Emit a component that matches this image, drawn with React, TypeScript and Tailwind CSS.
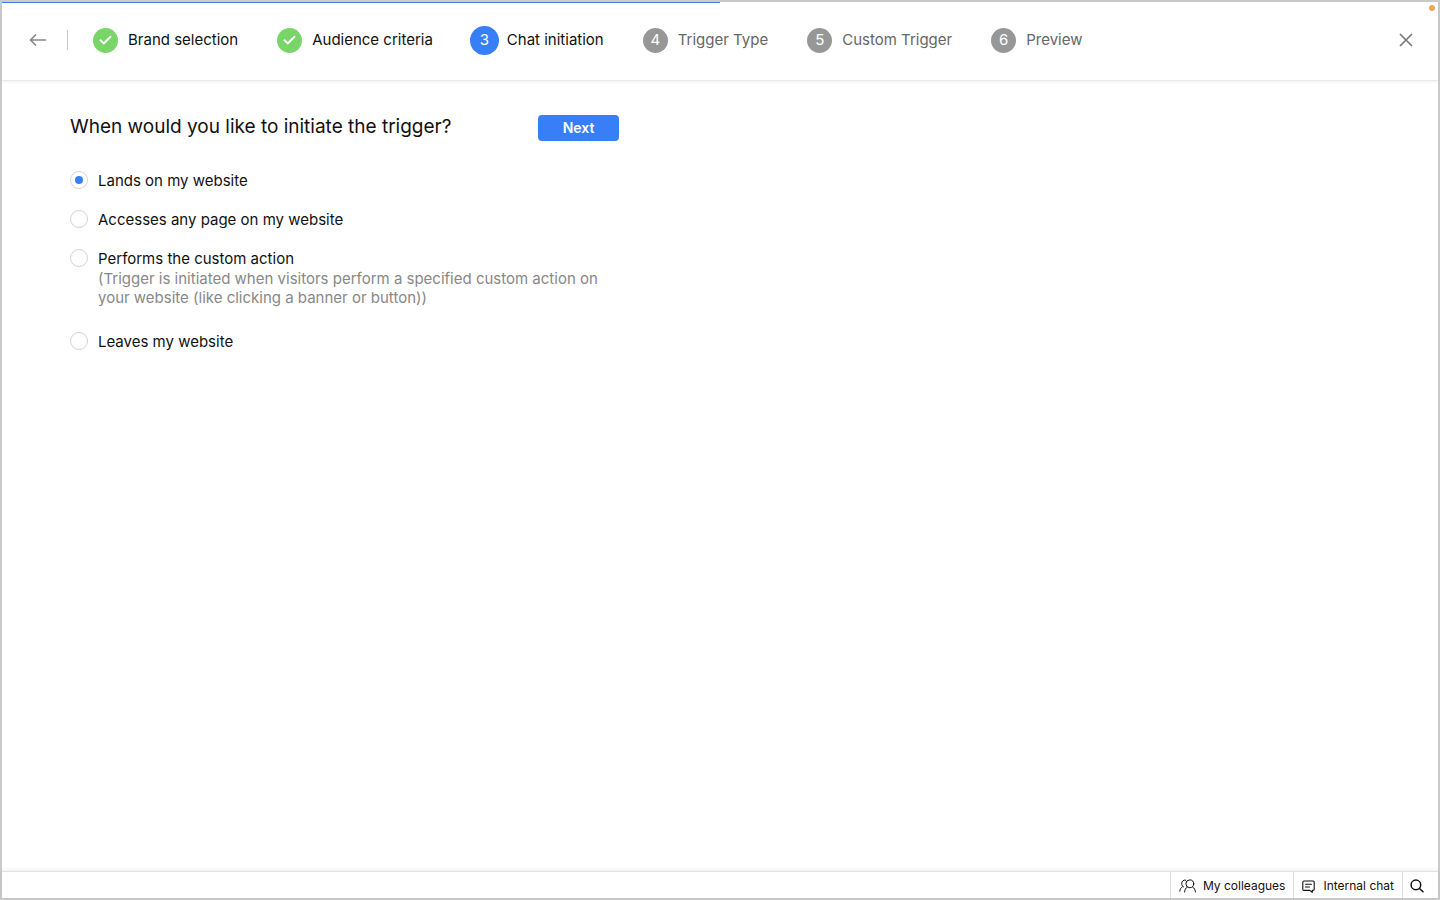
import { useState } from "react";
import clsx from "clsx";

const steps = [
  { id: 1, label: "Brand selection" },
  { id: 2, label: "Audience criteria" },
  { id: 3, label: "Chat initiation" },
  { id: 4, label: "Trigger Type" },
  { id: 5, label: "Custom Trigger" },
  { id: 6, label: "Preview" },
];

const options = [
  { value: "lands", label: "Lands on my website" },
  { value: "accesses", label: "Accesses any page on my website" },
  {
    value: "custom",
    label: "Performs the custom action",
    hint: "(Trigger is initiated when visitors perform a specified custom action on your website (like clicking a banner or button))",
  },
  { value: "leaves", label: "Leaves my website" },
];

const CURRENT_STEP = 3;

function BackIcon() {
  return (
    <svg width="18" height="14" viewBox="0 0 18 14" fill="none" stroke="currentColor" strokeWidth="1.7" strokeLinecap="round" strokeLinejoin="round">
      <path d="M16.5 7H1.5M6.500 2 1.500 7 6.500 12" />
    </svg>
  );
}

function CloseIcon() {
  return (
    <svg width="14" height="14" viewBox="0 0 14 14" fill="none" stroke="currentColor" strokeWidth="1.7">
      <path d="M1 1l12 12M13 1 1 13" />
    </svg>
  );
}

function CheckIcon() {
  return (
    <svg width="13" height="10" viewBox="0 0 13 10" fill="none" stroke="currentColor" strokeWidth="2">
      <path d="M1 4.7 4.8 8.4 12 1.2" />
    </svg>
  );
}

function PeopleIcon() {
  return (
    <svg width="18" height="14" viewBox="0 0 18 14" fill="none" stroke="currentColor" strokeWidth="1" strokeLinecap="round">
      <circle cx="10.8" cy="4.800" r="3.900" />
      <path d="M5.600 13c.1-2.300 1-3.900 2.600-4.900M16.400 13c-.1-2.300-1-3.900-2.700-4.900" />
      <path d="M6.600 1.100C4.500.6 2.700 2.300 2.700 4.500c0 1.400.7 2.600 1.700 3.300M3.500 7.700C1.900 8.600.9 10.100.8 12.200" />
    </svg>
  );
}

function ChatIcon() {
  return (
    <svg width="13" height="13" viewBox="0 0 13 13" fill="none" stroke="currentColor" strokeWidth="1.1" strokeLinecap="round" strokeLinejoin="round">
      <path d="M2 1h9a1.200 1.200 0 0 1 1.200 1.200v7a1.200 1.200 0 0 1-1.200 1.200h-.8v2L7.800 10.400H2A1.200 1.200 0 0 1 .8 9.200v-7A1.200 1.200 0 0 1 2 1Z" />
      <path d="M3.500 4.300h6M3.500 7h4" />
    </svg>
  );
}

function SearchIcon() {
  return (
    <svg width="14" height="14" viewBox="0 0 14 14" fill="none" stroke="currentColor" strokeWidth="1.5" strokeLinecap="round">
      <circle cx="5.900" cy="5.900" r="4.800" />
      <path d="M9.500 9.500 13 12.700" />
    </svg>
  );
}

function Step({ id, label }: { id: number; label: string }) {
  const done = id < CURRENT_STEP;
  const active = id === CURRENT_STEP;

  return (
    <li
      aria-current={active ? "step" : undefined}
      className={clsx("flex items-center gap-2.5 whitespace-nowrap", id > CURRENT_STEP ? "text-[#666]" : "text-[#111]")}
    >
      <span
        className={clsx(
          "flex items-center justify-center rounded-full text-white",
          done && "size-[25px] bg-[#79d568]",
          active && "-mx-0.5 size-[29px] bg-[#387ef7]",
          !done && !active && "size-[25px] bg-[#979797]"
        )}
      >
        {done ? <CheckIcon /> : id}
      </span>
      {label}
    </li>
  );
}

export default function App() {
  const [selected, setSelected] = useState("lands");

  return (
    <div className="relative flex min-h-screen flex-col border-2 border-[#cacaca] bg-white font-['Inter',sans-serif] text-[15px] text-[#111]">
      {/* Wizard progress */}
      <div className="absolute top-0 left-0 h-px w-1/2 bg-[#387ef7]" />
      <span className="absolute top-[3px] right-[3px] size-1.5 rounded-full bg-[#f2a654]" />

      <header className="flex h-[79px] items-center border-b border-[#e9e9e9] px-[25px] pb-0.5 shadow-[0_1px_3px_rgba(0,0,0,0.06)]">
        <button type="button" aria-label="Back" className="pl-0.5 text-[#888]">
          <BackIcon />
        </button>
        <div className="ml-5 h-5 w-px bg-[#ccc]" />
        <ol className="ml-[25px] flex items-center gap-[39px]">
          {steps.map((step) => (
            <Step key={step.id} {...step} />
          ))}
        </ol>
        <button type="button" aria-label="Close" className="ml-auto text-[#777]">
          <CloseIcon />
        </button>
      </header>

      <main className="flex-1 px-[68px] pt-8">
        <form className="max-w-[549px]" onSubmit={(e) => e.preventDefault()}>
          <div className="flex items-end justify-between">
            <h1 id="trigger-question" className="text-[19px] leading-7">
              When would you like to initiate the trigger?
            </h1>
            <button type="submit" className="h-[26px] w-[81px] rounded bg-[#387ef7] text-sm font-semibold text-white">
              Next
            </button>
          </div>

          <div role="radiogroup" aria-labelledby="trigger-question" className="mt-[30px] flex flex-col gap-5">
            {options.map(({ value, label, hint }) => (
              <div key={value} className="flex items-start gap-2.5">
                <input
                  type="radio"
                  name="trigger"
                  id={value}
                  value={value}
                  checked={selected === value}
                  onChange={() => setSelected(value)}
                  className="grid size-[18px] shrink-0 appearance-none place-content-center rounded-full border border-[#d4d4d4] before:size-2 before:rounded-full checked:before:bg-[#387ef7]"
                />
                <div className="leading-[19px]">
                  <label htmlFor={value} className="block">
                    {label}
                  </label>
                  {hint && <p className="mb-[5px] pt-px text-[#888]">{hint}</p>}
                </div>
              </div>
            ))}
          </div>
        </form>
      </main>

      <footer className="flex h-[27px] justify-end border-t border-[#e2e2e2] text-xs shadow-[0_-1px_4px_rgba(0,0,0,0.08)]">
        <button type="button" className="flex items-center gap-1.5 border-l border-[#ddd] px-2 pt-0.5">
          <PeopleIcon />
          My colleagues
        </button>
        <button type="button" className="flex items-center gap-2 border-l border-[#ddd] px-2 pt-0.5">
          <ChatIcon />
          Internal chat
        </button>
        <button type="button" aria-label="Search" className="flex w-9 items-center border-l border-[#ddd] pt-0.5 pl-[7px]">
          <SearchIcon />
        </button>
      </footer>
    </div>
  );
}
